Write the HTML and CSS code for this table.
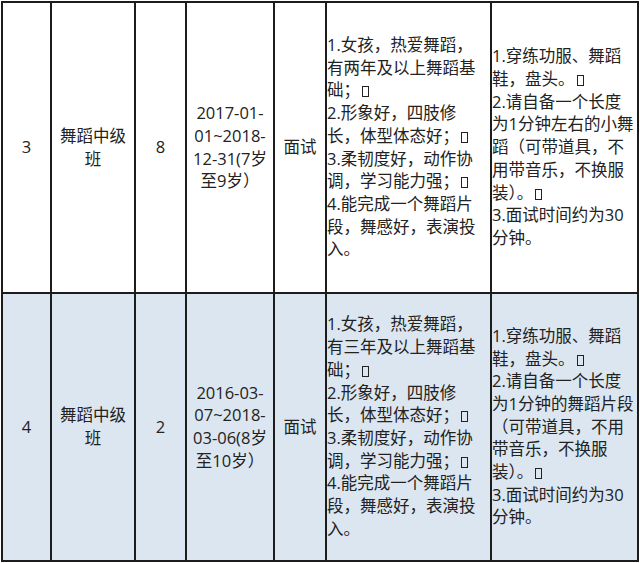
FILE: index.html
```html
<!DOCTYPE html>
<html lang="zh-CN">
<head>
<meta charset="utf-8">
<title>舞蹈中级班</title>
<link rel="stylesheet" href="styles.css">
</head>
<body>
<table class="grid">
  <colgroup>
    <col class="c-no">
    <col class="c-name">
    <col class="c-num">
    <col class="c-date">
    <col class="c-way">
    <col class="c-req">
    <col class="c-note">
  </colgroup>
  <tbody>
    <tr class="row r1">
      <td class="ctr">3</td>
      <td class="ctr">舞蹈中级<br>班</td>
      <td class="ctr">8</td>
      <td class="ctr">2017-01-<br>01~2018-<br>12-31(7岁<br>至9岁）</td>
      <td class="ctr">面试</td>
      <td class="req">1.女孩，热爱舞蹈，<br>有两年及以上舞蹈基<br>础；<span class="tofu"></span><br>2.形象好，四肢修<br>长，体型体态好；<span class="tofu"></span><br>3.柔韧度好，动作协<br>调，学习能力强；<span class="tofu"></span><br>4.能完成一个舞蹈片<br>段，舞感好，表演投<br>入。</td>
      <td class="note">1.穿练功服、舞蹈<br>鞋，盘头。<span class="tofu"></span><br>2.请自备一个长度<br>为1分钟左右的小舞<br>蹈（可带道具，不<br>用带音乐，不换服<br>装）。<span class="tofu"></span><br>3.面试时间约为30<br>分钟。</td>
    </tr>
    <tr class="row r2">
      <td class="ctr">4</td>
      <td class="ctr">舞蹈中级<br>班</td>
      <td class="ctr">2</td>
      <td class="ctr">2016-03-<br>07~2018-<br>03-06(8岁<br>至10岁）</td>
      <td class="ctr">面试</td>
      <td class="req">1.女孩，热爱舞蹈，<br>有三年及以上舞蹈基<br>础；<span class="tofu"></span><br>2.形象好，四肢修<br>长，体型体态好；<span class="tofu"></span><br>3.柔韧度好，动作协<br>调，学习能力强；<span class="tofu"></span><br>4.能完成一个舞蹈片<br>段，舞感好，表演投<br>入。</td>
      <td class="note">1.穿练功服、舞蹈<br>鞋，盘头。<span class="tofu"></span><br>2.请自备一个长度<br>为1分钟的舞蹈片段<br>（可带道具，不用<br>带音乐，不换服<br>装）。<span class="tofu"></span><br>3.面试时间约为30<br>分钟。</td>
    </tr>
  </tbody>
</table>
</body>
</html>
```

FILE: styles.css
```css
html, body {
  margin: 0;
  padding: 0;
  background: #ffffff;
}

.grid {
  margin: 1px 0 0 1px;
  width: 638px;
  table-layout: fixed;
  border-collapse: collapse;
  font-family: "Open Sans", "Noto Sans CJK SC", sans-serif;
  font-size: 16.5px;
  line-height: 22.7px;
  color: #222222;
}

.c-no { width: 49px; }
.c-name { width: 84px; }
.c-num { width: 51px; }
.c-date { width: 88px; }
.c-way { width: 52px; }
.c-req { width: 165px; }
.c-note { width: 147px; }

.grid td {
  border: 2px solid #1c1c1c;
  padding: 0;
  vertical-align: middle;
  white-space: nowrap;
  overflow: hidden;
}

.r1 { height: 291px; }
.r2 { height: 268px; background: #dce6f1; }

.ctr { text-align: center; }

.req {
  text-align: left;
  padding-left: 1px;
}

.note {
  text-align: left;
  padding-left: 3px;
}

.tofu {
  display: inline-block;
  width: 5px;
  height: 9px;
  border: 1.5px solid #222222;
  margin-left: 2px;
  vertical-align: -1px;
}
```
